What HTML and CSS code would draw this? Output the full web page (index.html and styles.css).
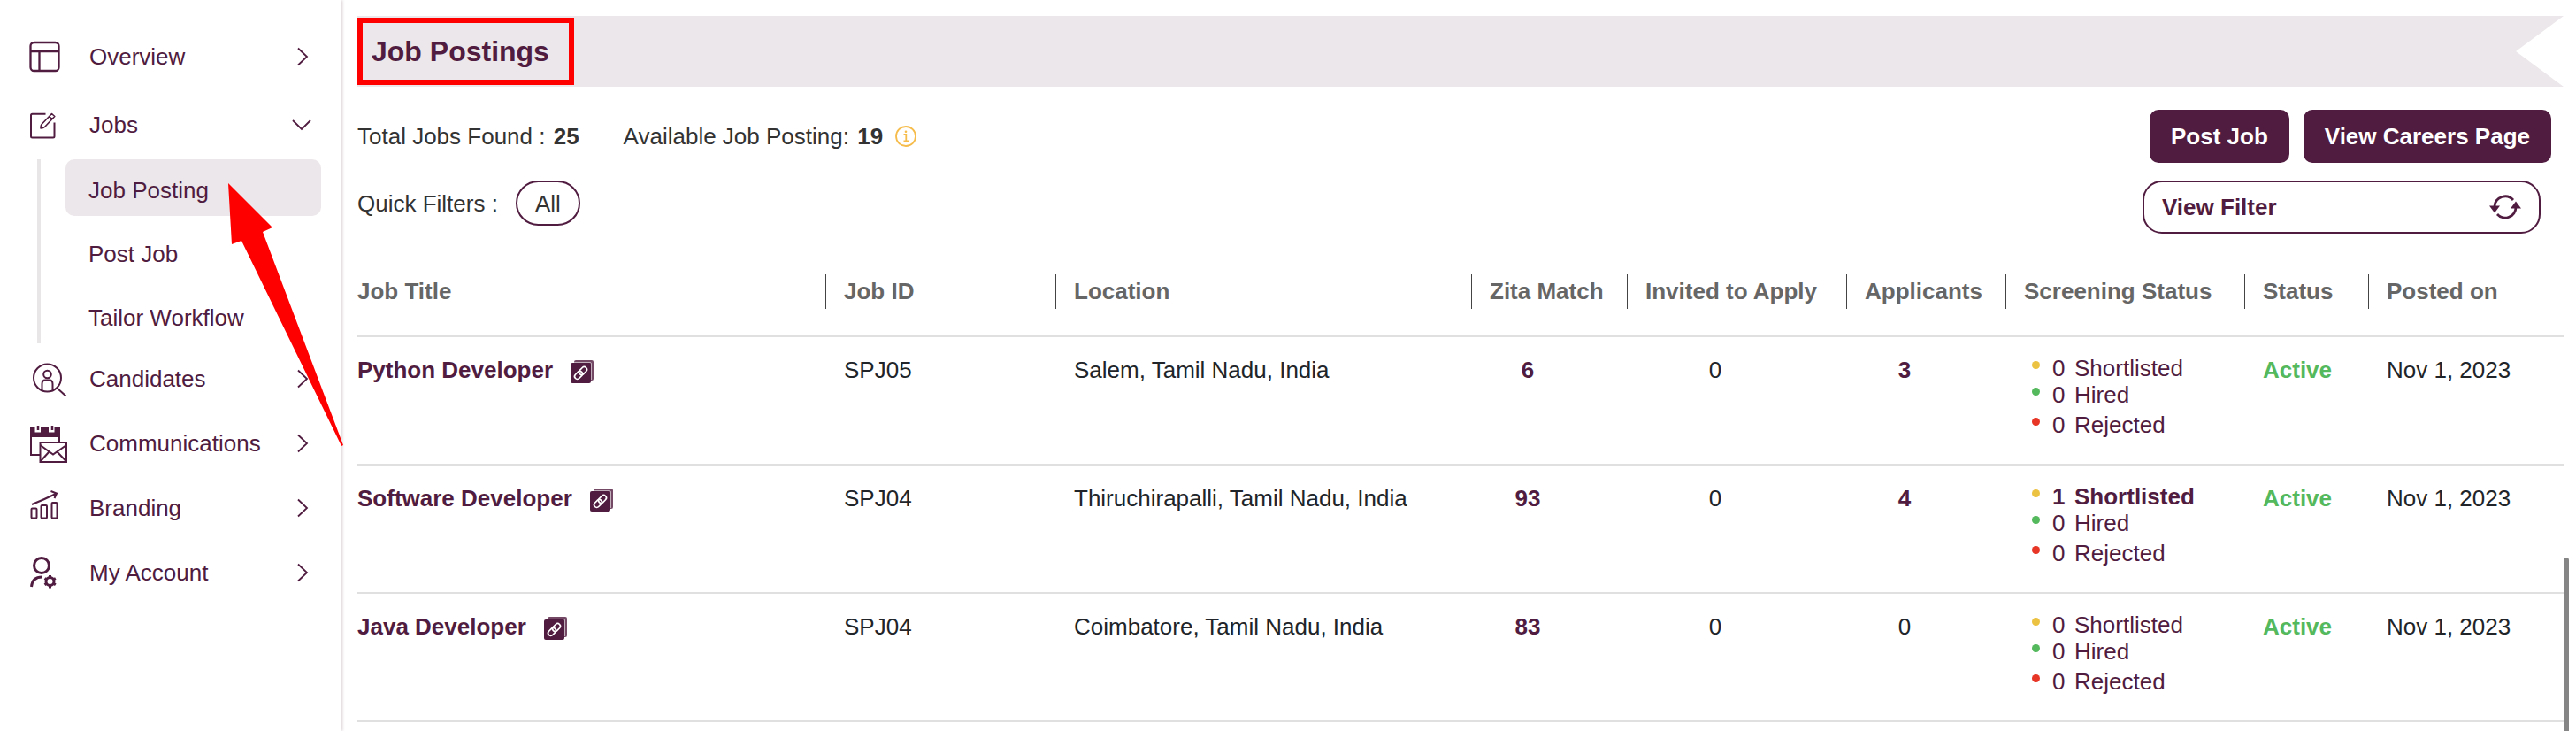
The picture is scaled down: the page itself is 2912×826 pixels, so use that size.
FILE: index.html
```html
<!DOCTYPE html>
<html lang="en">
    <head>
        <meta charset="UTF-8">
        <meta name="viewport" content="width=device-width, initial-scale=1.0">
        <title>Job Postings</title>

        <link rel="stylesheet" href="styles.css">
    </head>
    <body>
        <!-- shared shapes -->
        <svg class="sprite" aria-hidden="true">
            <symbol id="chevron-right" viewBox="0 0 24 24">
                <path d="M8 2.5L18 12L8 21.5" fill="none" stroke="currentColor" stroke-width="1.8"/>
            </symbol>
            <symbol id="chevron-down" viewBox="0 0 24 24">
                <path d="M2 7L12 17L22 7" fill="none" stroke="currentColor" stroke-width="1.8"/>
            </symbol>
            <symbol id="copy-link" viewBox="0 0 26 26">
                <rect x="4" y="0" width="22" height="23" rx="2" fill="currentColor" opacity=".8"/>
                <path d="M3 2.500H22Q23.500 2.500 23.500 4V22" fill="none" stroke="#fff" stroke-width=".8" opacity=".7"/>
                <rect x="0" y="3" width="23" height="23" rx="2" fill="currentColor"/>
                <g fill="none" stroke="#fff" stroke-width="1.7" transform="rotate(-45 11.5 14.5)">
                    <rect x="3" y="11.5" width="10" height="6" rx="3"/>
                    <rect x="10" y="11.5" width="10" height="6" rx="3"/>
                </g>
            </symbol>
        </svg>

        <nav class="sidebar">
            <ul class="menu">
                <li>
                    <a class="menu-link" href="#">
                        <svg class="menu-icon" viewBox="0 0 44 44" fill="none" stroke="currentColor" stroke-width="2.3">
                            <rect x="1.5" y="6" width="32" height="32" rx="4"/>
                            <path d="M1.5 16H33.5M11.5 16V38"/>
                        </svg>
                        <span>Overview</span>
                        <svg class="chevron"><use href="#chevron-right"/></svg>
                    </a>
                </li>
                <li>
                    <a class="menu-link" href="#">
                        <svg class="menu-icon" viewBox="0 0 44 44" fill="none" stroke="currentColor" stroke-width="2" stroke-linejoin="round">
                            <path d="M18.5 9.8H3.5Q2 9.800 2 11.3V35Q2 36.5 3.5 36.5H27Q28.5 36.5 28.5 35V19.5"/>
                            <path d="M25.5 9.5L28.8 12.5L17.5 24.5Q16 26 13 26Q12.8 23 14 21.5ZM22.5 12.5L26 15.5" stroke-width="1.6"/>
                        </svg>
                        <span>Jobs</span>
                        <svg class="chevron"><use href="#chevron-down"/></svg>
                    </a>
                    <ul class="submenu">
                        <li><a class="active" href="#">Job Posting</a></li>
                        <li><a href="#">Post Job</a></li>
                        <li><a href="#">Tailor Workflow</a></li>
                    </ul>
                </li>
                <li>
                    <a class="menu-link" href="#">
                        <svg class="menu-icon" viewBox="0 0 44 44" fill="none" stroke="currentColor" stroke-width="2">
                            <circle cx="20.5" cy="21" r="15.5"/>
                            <circle cx="20.5" cy="17" r="4.3"/>
                            <path d="M14.5 35V28Q14.5 23.5 18 23.5H23Q26.5 23.5 26.5 28V35"/>
                            <path d="M31.5 32.5L41.5 41.5"/>
                        </svg>
                        <span>Candidates</span>
                        <svg class="chevron"><use href="#chevron-right"/></svg>
                    </a>
                </li>
                <li>
                    <a class="menu-link" href="#">
                        <svg class="menu-icon" viewBox="0 0 44 44" fill="none" stroke="currentColor" stroke-width="2">
                            <path d="M1 4H6.500V9.5H13V4H22V9.5H28.500V4H35V15H1Z" fill="currentColor" stroke="none"/>
                            <path d="M10 2V7M26 2V7" stroke-width="2.5"/>
                            <path d="M2 14V35H12M34 14V20"/>
                            <rect x="12.5" y="21" width="29.5" height="22"/>
                            <path d="M12.5 24L27 34.5L42 24M12.5 42.5L22.5 31.5M42 42.5L31.5 31.5"/>
                        </svg>
                        <span>Communications</span>
                        <svg class="chevron"><use href="#chevron-right"/></svg>
                    </a>
                </li>
                <li>
                    <a class="menu-link" href="#">
                        <svg class="menu-icon" viewBox="0 0 44 44" fill="none" stroke="currentColor" stroke-width="2">
                            <rect x="2.5" y="22.5" width="6" height="11" rx="1"/>
                            <rect x="13.5" y="19" width="6.5" height="14.5" rx="1"/>
                            <rect x="25.5" y="16" width="6" height="17.5" rx="1"/>
                            <path d="M3 18Q18 12 30 6M24.5 3L31 5.5L28.5 11"/>
                        </svg>
                        <span>Branding</span>
                        <svg class="chevron"><use href="#chevron-right"/></svg>
                    </a>
                </li>
                <li>
                    <a class="menu-link" href="#">
                        <svg class="menu-icon" viewBox="0 0 44 44" fill="none" stroke="currentColor" stroke-width="3">
                            <circle cx="14" cy="14" r="8.5"/>
                            <path d="M2.5 38Q3.5 27 14.5 27"/>
                            <circle cx="23.5" cy="32" r="4.5"/>
                            <path d="M23.5 25V28M23.5 36V39.5M17.5 28.5L20 30M27 34L29.8 35.8M17.5 35.8L20 34M27 30L29.8 28.5"/>
                        </svg>
                        <span>My Account</span>
                        <svg class="chevron"><use href="#chevron-right"/></svg>
                    </a>
                </li>
            </ul>
        </nav>

        <main class="content">
            <header class="banner">
                <h1>Job Postings</h1>
            </header>

            <section class="toolbar">
                <div class="counts">
                    <p>Total Jobs Found : <strong>25</strong></p>
                    <p>Available Job Posting: <strong>19</strong></p>
                    <svg class="info" viewBox="0 0 24 24" fill="none" stroke="currentColor" stroke-width="1.8">
                        <circle cx="12" cy="12" r="11"/>
                        <path d="M9.5 10H12.3V17.5M9.5 17.5H15"/>
                        <circle cx="12" cy="6.8" r="1.3" fill="currentColor" stroke="none"/>
                    </svg>
                </div>
                <div class="actions">
                    <button class="btn">Post Job</button>
                    <button class="btn">View Careers Page</button>
                </div>
            </section>

            <section class="filters">
                <div class="quick">
                    <span>Quick Filters :</span>
                    <button class="pill">All</button>
                </div>
                <button class="view-filter">
                    View Filter
                    <svg class="refresh" viewBox="0 0 36 28" fill="none" stroke="currentColor" stroke-width="2.8">
                        <path d="M6 13A12 12 0 0 1 27 6M30 14A12 12 0 0 1 9 22"/>
                        <path d="M0 12.5H12L6 20.5ZM24 15.5H36L30 7.5Z" fill="currentColor" stroke="none"/>
                    </svg>
                </button>
            </section>

            <table class="jobs">
                <colgroup>
                    <col>
                    <col class="col-id">
                    <col class="col-location">
                    <col class="col-match">
                    <col class="col-invited">
                    <col class="col-applicants">
                    <col class="col-screening">
                    <col class="col-status">
                    <col class="col-posted">
                </colgroup>
                <thead>
                    <tr>
                        <th><div>Job Title</div></th>
                        <th><div>Job ID</div></th>
                        <th><div>Location</div></th>
                        <th><div>Zita Match</div></th>
                        <th><div>Invited to Apply</div></th>
                        <th><div>Applicants</div></th>
                        <th><div>Screening Status</div></th>
                        <th><div>Status</div></th>
                        <th><div>Posted on</div></th>
                    </tr>
                </thead>
                <tbody>
                    <tr>
                        <td><a class="job" href="#">Python Developer <svg class="link-icon"><use href="#copy-link"/></svg></a></td>
                        <td>SPJ05</td>
                        <td>Salem, Tamil Nadu, India</td>
                        <td class="num"><a href="#">6</a></td>
                        <td class="num">0</td>
                        <td class="num"><a href="#">3</a></td>
                        <td class="screening">
                            <ul>
                                <li class="shortlisted"><span>0</span>Shortlisted</li>
                                <li class="hired"><span>0</span>Hired</li>
                                <li class="rejected"><span>0</span>Rejected</li>
                            </ul>
                        </td>
                        <td class="status">Active</td>
                        <td>Nov 1, 2023</td>
                    </tr>
                    <tr>
                        <td><a class="job" href="#">Software Developer <svg class="link-icon"><use href="#copy-link"/></svg></a></td>
                        <td>SPJ04</td>
                        <td>Thiruchirapalli, Tamil Nadu, India</td>
                        <td class="num"><a href="#">93</a></td>
                        <td class="num">0</td>
                        <td class="num"><a href="#">4</a></td>
                        <td class="screening">
                            <ul>
                                <li class="shortlisted has-count"><span>1</span>Shortlisted</li>
                                <li class="hired"><span>0</span>Hired</li>
                                <li class="rejected"><span>0</span>Rejected</li>
                            </ul>
                        </td>
                        <td class="status">Active</td>
                        <td>Nov 1, 2023</td>
                    </tr>
                    <tr>
                        <td><a class="job" href="#">Java Developer <svg class="link-icon"><use href="#copy-link"/></svg></a></td>
                        <td>SPJ04</td>
                        <td>Coimbatore, Tamil Nadu, India</td>
                        <td class="num"><a href="#">83</a></td>
                        <td class="num">0</td>
                        <td class="num">0</td>
                        <td class="screening">
                            <ul>
                                <li class="shortlisted"><span>0</span>Shortlisted</li>
                                <li class="hired"><span>0</span>Hired</li>
                                <li class="rejected"><span>0</span>Rejected</li>
                            </ul>
                        </td>
                        <td class="status">Active</td>
                        <td>Nov 1, 2023</td>
                    </tr>
                </tbody>
            </table>
        </main>

        <div class="scroll-thumb"></div>

        <!-- arrow pointing at the Job Posting entry -->
        <svg class="pointer" viewBox="0 0 132 300" aria-hidden="true">
            <path d="M1 0L51 50L40 55L131 296L129 297L16 65L5 69Z" fill="#f00"/>
        </svg>
    </body>
</html>
```
FILE: styles.css
```css
* {
    padding: 0;
    margin: 0;
    box-sizing: border-box;
    font-family: "Liberation Sans", Arial, Helvetica, sans-serif;
}

body {
    display: flex;
    position: relative;
    min-height: 100vh;
    overflow: hidden;
    background-color: #fff;
    color: #212529;
    font-size: 26px;
    line-height: 30px;
}

ul {
    list-style: none;
}

a {
    color: #501c40;
    text-decoration: none;
}

button {
    font-size: 26px;
    line-height: 30px;
    cursor: pointer;
}

.sprite {
    position: absolute;
    width: 0;
    height: 0;
}

/* sidebar */
.sidebar {
    flex: none;
    width: 386px;
    padding-top: 27px;
    border-right: 1px solid #dccbd3;
    box-shadow: 1px 0 3px #d9cfd4;
}

.menu-link {
    display: flex;
    align-items: center;
    height: 73px;
    padding: 0 32px 0 33px;
}

.menu > li:first-child {
    margin-bottom: 4px;
}

.menu-icon {
    width: 44px;
    height: 44px;
    margin-right: 24px;
}

.chevron {
    width: 24px;
    height: 24px;
    margin-left: auto;
}

.submenu {
    display: flex;
    flex-direction: column;
    gap: 8px;
    margin: 3px 22px 3px 42px;
    padding-left: 28px;
    border-left: 4px solid #e8e6e7;
}

.submenu a {
    display: block;
    height: 64px;
    padding: 20px 26px 0;
    border-radius: 10px;
}

.submenu a.active {
    background-color: #ece7ea;
}

/* main column */
.content {
    flex: 1;
    padding: 18px 14px 0 18px;
}

.banner {
    display: flex;
    align-items: center;
    height: 80px;
    background-color: #ece7ea;
    clip-path: polygon(0 0, 100% 0, calc(100% - 54px) 50%, 100% 100%, 0 100%);
}

.banner h1 {
    padding: 14px 22px 14px 10px;
    border: 6px solid #f00;
    color: #501c40;
    font-size: 32px;
    line-height: 36px;
}

.toolbar {
    display: flex;
    justify-content: space-between;
    align-items: center;
    margin-top: 26px;
    padding-right: 14px;
}

.counts {
    display: flex;
    align-items: center;
    color: #333;
}

.counts p {
    margin-right: 50px;
}

.counts p + p {
    margin-right: 14px;
}

.counts strong {
    margin-left: 2px;
}

.info {
    width: 24px;
    height: 24px;
    color: #f6bc4b;
}

.actions {
    display: flex;
    gap: 16px;
}

.btn {
    height: 60px;
    padding: 0 24px;
    border: none;
    border-radius: 10px;
    background-color: #501c40;
    color: #fff;
    font-weight: bold;
}

.filters {
    display: flex;
    justify-content: space-between;
    align-items: flex-start;
    margin-top: 20px;
    padding-right: 26px;
}

.quick {
    display: flex;
    align-items: center;
    gap: 20px;
    color: #333;
}

.pill {
    height: 51px;
    padding: 0 20px;
    border: 2px solid #501c40;
    border-radius: 26px;
    background-color: #fff;
    color: #333;
}

.view-filter {
    display: flex;
    align-items: center;
    justify-content: space-between;
    width: 450px;
    height: 60px;
    padding: 0 20px;
    border: 2px solid #501c40;
    border-radius: 22px;
    background-color: #fff;
    color: #501c40;
    font-weight: bold;
}

.refresh {
    width: 36px;
    height: 28px;
}

/* jobs table */
.jobs {
    width: 100%;
    margin-top: 46px;
    border-collapse: separate;
    border-spacing: 0;
    table-layout: fixed;
}

.col-id {
    width: 260px;
}

.col-location {
    width: 470px;
}

.col-match {
    width: 176px;
}

.col-invited {
    width: 248px;
}

.col-applicants {
    width: 180px;
}

.col-screening {
    width: 270px;
}

.col-status {
    width: 140px;
}

.col-posted {
    width: 221px;
}

.jobs th {
    padding-bottom: 30px;
    border-bottom: 2px solid #e0e0e0;
    color: #666;
    text-align: left;
    white-space: nowrap;
}

.jobs th div {
    padding-left: 20px;
    border-left: 1px solid #444;
    line-height: 39px;
}

.jobs th:first-child div {
    padding-left: 0;
    border-left: none;
}

.jobs td {
    height: 145px;
    padding: 22px 0 0 21px;
    border-bottom: 2px solid #e0e0e0;
    vertical-align: top;
}

.jobs td:first-child {
    padding-left: 0;
}

.jobs td.num {
    padding-left: 0;
    padding-right: 48px;
    text-align: center;
}

.num a {
    font-weight: bold;
}

.job {
    display: flex;
    align-items: center;
    gap: 20px;
    font-weight: bold;
}

.link-icon {
    width: 26px;
    height: 26px;
    margin-top: 4px;
}

.jobs td.screening {
    padding-top: 20px;
}

.screening li {
    display: flex;
    padding-left: 9px;
    color: #501c40;
}

.screening li::before {
    content: "";
    width: 9px;
    height: 9px;
    margin: 7px 14px 0 0;
    border-radius: 50%;
}

.screening li span {
    width: 25px;
}

.screening .has-count {
    font-weight: bold;
}

.screening .shortlisted::before {
    background-color: #ecc243;
}

.screening .hired::before {
    background-color: #54b85c;
}

.screening .rejected {
    margin-top: 4px;
}

.screening .rejected::before {
    background-color: #e73526;
}

.jobs td.status {
    color: #54b85c;
    font-weight: bold;
}

/* things lying over the page */
.scroll-thumb {
    position: absolute;
    top: 630px;
    right: 8px;
    bottom: 0;
    width: 6px;
    border-radius: 3px 3px 0 0;
    background-color: #858585;
}

.pointer {
    position: absolute;
    top: 207px;
    left: 257px;
    width: 132px;
    height: 300px;
    pointer-events: none;
}
```
